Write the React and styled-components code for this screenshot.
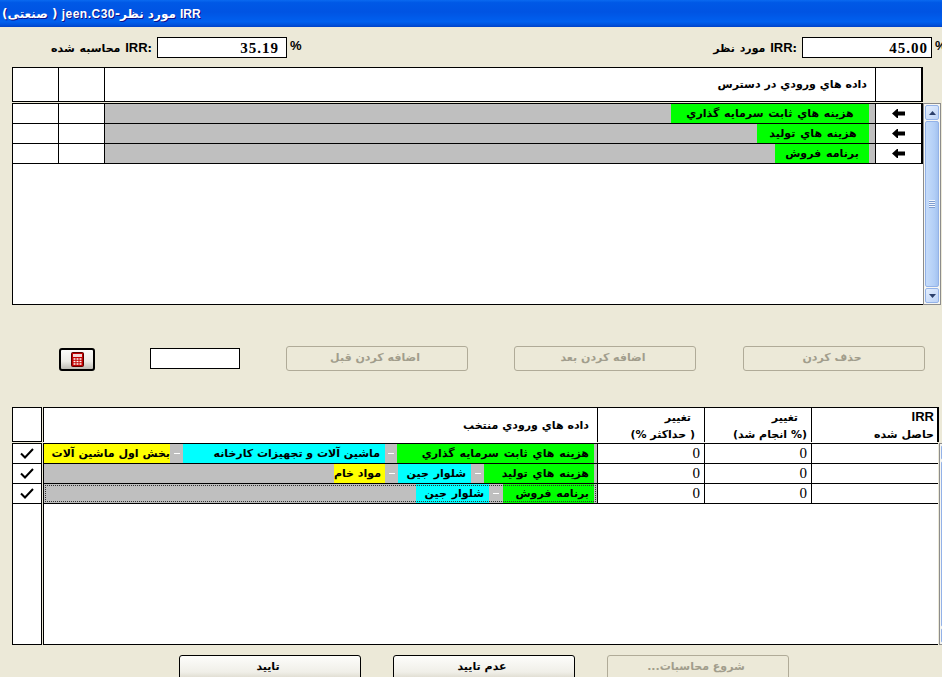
import React from 'react';
import styled, { createGlobalStyle } from 'styled-components';

const Global = createGlobalStyle`
  html, body { margin: 0; padding: 0; background: #ece9d8; }
  * { box-sizing: border-box; }
`;

const arabic = `"DejaVu Sans", "Noto Sans", sans-serif`;

const Page = styled.div`
  width: 942px;
  height: 677px;
  overflow: hidden;
  background: #ece9d8;
  font-family: ${arabic};
  font-weight: 700;
  font-size: 11px;
  color: #000;
`;

const TitleBar = styled.div`
  height: 27px;
  padding: 0 2px;
  direction: rtl;
  text-align: left;
  white-space: nowrap;
  line-height: 29px;
  color: #fff;
  font-size: 12px;
  background: linear-gradient(#0a6af0, #0058e6 10%, #0054e3 45%, #0060ef 80%, #0055e0 90%, #0042c8);
  text-shadow: 1px 1px 0 #0f1089;
`;

const Latin = styled.span`
  font-family: "Liberation Sans", sans-serif;
  font-size: ${p => p.$size || 12}px;
  letter-spacing: ${p => p.$spacing || 0}px;
`;

const TopRow = styled.div`
  margin-top: 10px;
  padding-left: 7px;
  height: 21px;
  display: grid;
  grid-template-columns: 645px 1fr;
`;

const Field = styled.div`
  display: flex;
  align-items: center;
`;

const FieldLabel = styled.div`
  width: 145px;
  flex: none;
  direction: rtl;
  text-align: right;
  white-space: nowrap;
  word-spacing: 1px;
`;

const Amount = styled.div`
  width: 130px;
  flex: none;
  height: 21px;
  margin-left: 5px;
  padding-right: ${p => p.$pad}px;
  border: 1px solid #000;
  background: #fff;
  text-align: right;
  font: 700 15px/20px "Liberation Serif", serif;
  letter-spacing: 1px;
`;

const Percent = styled.div`
  flex: none;
  margin: -5px 0 0 3px;
  font: 700 13px "Liberation Sans", sans-serif;
`;

const Header = styled.div`
  margin: 9px 0 1px 12px;
  width: 911px;
  height: 35px;
  display: grid;
  grid-template-columns: 45px 45px 770px 45px;
  gap: 1px;
  padding: 1px 2px 1px 1px;
  background: #000;
`;

const Cell = styled.div`
  background: #fff;
  direction: rtl;
  padding-right: ${p => p.$pad || 0}px;
  display: flex;
  align-items: center;
  white-space: nowrap;
`;

const ListWrap = styled.div`
  margin-left: 12px;
  height: 202px;
  display: flex;
`;

const List = styled.div`
  width: 911px;
  flex: none;
  background: #fff;
  border: 1px solid #000;
  border-right: 0;
`;

const AvailRow = styled.div`
  display: grid;
  grid-template-columns: 45px 45px 770px 45px;
  gap: 1px;
  height: 20px;
  padding: 0 2px 1px 0;
  background: #000;
`;

const Track = styled.div`
  position: relative;
  display: flex;
  direction: rtl;
  overflow: hidden;
  height: 100%;
  padding-right: ${p => p.$inset}px;
  background: #bfbfbf;
  ${p => p.$focused && `
    &::after {
      content: '';
      position: absolute;
      inset: 1px;
      border: 1px dotted #333;
    }
  `}
`;

const Segment = styled.div`
  flex: none;
  width: ${p => p.$w}px;
  padding: 0 ${p => p.$center ? 0 : p.$pad ?? 5}px;
  background: ${p => p.$color};
  text-align: ${p => p.$center ? 'center' : 'right'};
  line-height: 19px;
  white-space: nowrap;
  word-spacing: ${p => p.$tight ? 0 : 1}px;
`;

const Dash = styled.div`
  flex: none;
  width: ${p => p.$w || 13}px;
  display: flex;
  align-items: center;
  justify-content: center;
  &::after {
    content: '';
    width: 6px;
    height: 1px;
    background: #fff;
  }
`;

const ArrowCell = styled(Cell)`
  justify-content: center;
`;

const Scrollbar = styled.div`
  width: 18px;
  flex: none;
  padding: 1px;
  display: flex;
  flex-direction: column;
  gap: 1px;
  background: #f6f6f2;
  border: 1px solid #8c8c8c;
`;

const ScrollButton = styled.div`
  height: 15px;
  flex: none;
  border: 1px solid #93b2e8;
  border-radius: 2px;
  background: linear-gradient(135deg, #e4eefd, #bcd3f7);
  display: flex;
  align-items: center;
  justify-content: center;
`;

const Thumb = styled.div`
  flex: 1;
  border: 1px solid #93b2e8;
  border-radius: 2px;
  background: linear-gradient(90deg, #c6dcfa, #b2cef6 70%, #a4c2ef);
  display: flex;
  align-items: center;
  justify-content: center;
`;

const Grip = styled.div`
  width: 6px;
  height: 8px;
  background: repeating-linear-gradient(#f2f6fd 0 1px, #7e9ccf 1px 2px);
`;

const Actions = styled.div`
  margin-top: 41px;
  padding-left: 59px;
  height: 25px;
  display: flex;
  align-items: center;
  gap: 46px;
`;

const CalcButton = styled.div`
  width: 36px;
  height: 23px;
  margin: 2px 9px 0 0;
  border: 2px solid #000;
  border-radius: 3px;
  background: linear-gradient(#fbfbfa, #ecebe6 60%, #bdbbb4);
  display: flex;
  align-items: center;
  justify-content: center;
`;

const SmallInput = styled.div`
  width: 90px;
  height: 21px;
  border: 1px solid #000;
  background: #fff;
`;

const WinButton = styled.div`
  width: 182px;
  height: 25px;
  flex: none;
  direction: rtl;
  margin-left: ${p => p.$nudge || 0}px;
  padding: 0 4px 2px 0;
  display: flex;
  align-items: center;
  justify-content: center;
  border: 1px solid ${p => p.$disabled ? '#b0ab98' : '#000'};
  border-radius: 3px;
  color: ${p => p.$disabled ? '#a19d8c' : '#000'};
  background: ${p => p.$disabled ? 'transparent' : 'linear-gradient(#fdfdfb, #f0efe8 70%, #dcd9cc)'};
`;

const SelectedHead = styled.div`
  margin: 36px 0 1px 12px;
  height: 35px;
  display: flex;
  gap: 1px;
`;

const CheckHead = styled.div`
  width: 30px;
  flex: none;
  background: #fff;
  border: 1px solid #000;
`;

const HeadGrid = styled.div`
  width: 896px;
  flex: none;
  display: grid;
  grid-template-columns: 553px 106px 106px 125px;
  gap: 1px;
  padding: 1px 2px 1px 1px;
  background: #000;
`;

const TwoLine = styled.div`
  background: #fff;
  direction: rtl;
  display: flex;
  flex-direction: column;
  justify-content: ${p => p.$middle ? 'center' : 'flex-end'};
  padding: 0 ${p => p.$pad}px 1px 0;
  line-height: 17px;
  white-space: nowrap;
`;

const FirstLine = styled.div`
  padding-right: ${p => p.$pad || 0}px;
`;

const SelectedBody = styled.div`
  margin-left: 12px;
  height: 202px;
  display: flex;
  gap: 1px;
`;

const CheckColumn = styled.div`
  width: 30px;
  flex: none;
  background: #fff;
  border: 1px solid #000;
`;

const CheckCell = styled.div`
  height: 20px;
  border-bottom: 1px solid #000;
  display: flex;
  align-items: center;
  justify-content: center;
`;

const SelectedList = styled.div`
  width: 895px;
  flex: none;
  background: #fff;
  border: 1px solid #000;
  border-right: 0;
`;

const SelectedRow = styled.div`
  display: grid;
  grid-template-columns: 553px 106px 106px 126px;
  gap: 1px;
  height: 20px;
  padding-bottom: 1px;
  background: #000;
`;

const Amount0 = styled.div`
  background: #fff;
  text-align: right;
  padding-right: 4px;
  font: 400 15px/19px "Liberation Serif", serif;
`;

const Footer = styled.div`
  margin-top: 10px;
  padding-left: 179px;
  display: flex;
  gap: 32px;
`;

const LeftArrow = () => (
  <svg width="13" height="9" viewBox="0 0 13 9">
    <path d="M0 4.5 5 0h1v2.5h7v4H6V9H5z" fill="#000" />
  </svg>
);

const Check = () => (
  <svg width="14" height="11" viewBox="0 0 14 11">
    <path d="M1 5.5 5 9.5 13 1" fill="none" stroke="#000" strokeWidth="2" />
  </svg>
);

const Triangle = ({ down }) => (
  <svg width="7" height="4" viewBox="0 0 7 4">
    <path d={down ? 'M0 0h7L3.5 4z' : 'M3.5 0 7 4H0z'} fill="#2b3f6b" />
  </svg>
);

const Calculator = () => (
  <svg width="13" height="15" viewBox="0 0 13 15">
    <rect x="0.5" y="0.5" width="12" height="14" rx="1" fill="#c30000" stroke="#5a0000" />
    <rect x="2" y="2" width="9" height="3" fill="#f3d6d6" />
    <path d="M2.5 7h2M5.5 7h2M8.5 7h2M2.5 9.5h2M5.5 9.5h2M8.5 9.5h2M2.5 12h2M5.5 12h2M8.5 12h2" stroke="#fff" strokeWidth="1.4" />
  </svg>
);

const VScroll = () => (
  <Scrollbar>
    <ScrollButton><Triangle /></ScrollButton>
    <Thumb><Grip /></Thumb>
    <ScrollButton><Triangle down /></ScrollButton>
  </Scrollbar>
);

const available = [
  { label: 'هزينه هاي ثابت سرمايه گذاري', w: 198 },
  { label: 'هزينه هاي توليد', w: 112 },
  { label: 'برنامه فروش', w: 94 },
];

const selected = [
  {
    parts: [
      { label: 'هزينه هاي ثابت سرمايه گذاري', w: 197, color: '#00ff00', dash: 12 },
      { label: 'ماشين آلات و تجهيزات كارخانه', w: 202, color: '#00ffff', tight: true, dash: 13 },
      { label: 'بخش اول ماشين آلات', w: 127, color: '#ffff00', tight: true, pad: 0 },
    ],
  },
  {
    parts: [
      { label: 'هزينه هاي توليد', w: 110, color: '#00ff00', dash: 13 },
      { label: 'شلوار جين', w: 73, color: '#00ffff', dash: 13 },
      { label: 'مواد خام', w: 51, color: '#ffff00', tight: true, pad: 4 },
    ],
  },
  {
    focused: true,
    parts: [
      { label: 'برنامه فروش', w: 91, color: '#00ff00', dash: 14 },
      { label: 'شلوار جين', w: 73, color: '#00ffff' },
    ],
  },
];

export default function App() {
  return (
    <Page>
      <Global />
      <TitleBar>
        <Latin>IRR</Latin> مورد نظر-<Latin $spacing={0.5}>jeen.C30</Latin> ( صنعتی)
      </TitleBar>

      <TopRow>
        <Field>
          <FieldLabel>:<Latin $size={13}>IRR</Latin> محاسبه شده</FieldLabel>
          <Amount $pad={7}>35.19</Amount>
          <Percent>%</Percent>
        </Field>
        <Field>
          <FieldLabel>:<Latin $size={13}>IRR</Latin> مورد نظر</FieldLabel>
          <Amount $pad={3}>45.00</Amount>
          <Percent>%</Percent>
        </Field>
      </TopRow>

      <Header>
        <Cell />
        <Cell />
        <Cell $pad={8}>داده هاي ورودي در دسترس</Cell>
        <Cell />
      </Header>

      <ListWrap>
        <List>
          {available.map(row => (
            <AvailRow key={row.label}>
              <Cell />
              <Cell />
              <Track $inset={6}>
                <Segment $w={row.w} $color="#00ff00" $center>{row.label}</Segment>
              </Track>
              <ArrowCell><LeftArrow /></ArrowCell>
            </AvailRow>
          ))}
        </List>
        <VScroll />
      </ListWrap>

      <Actions>
        <CalcButton><Calculator /></CalcButton>
        <SmallInput />
        <WinButton $disabled>اضافه كردن قبل</WinButton>
        <WinButton $disabled>اضافه كردن بعد</WinButton>
        <WinButton $disabled $nudge={1}>حذف كردن</WinButton>
      </Actions>

      <SelectedHead>
        <CheckHead />
        <HeadGrid>
          <TwoLine $pad={8} $middle>داده هاي ورودي منتخب</TwoLine>
          <TwoLine $pad={9}>
            <FirstLine $pad={4}>تغيير</FirstLine>
            <div>( حداكثر %)</div>
          </TwoLine>
          <TwoLine $pad={4}>
            <FirstLine $pad={9}>تغيير</FirstLine>
            <div>(% انجام شد)</div>
          </TwoLine>
          <TwoLine $pad={3}>
            <FirstLine><Latin $size={13}>IRR</Latin></FirstLine>
            <div>حاصل شده</div>
          </TwoLine>
        </HeadGrid>
      </SelectedHead>

      <SelectedBody>
        <CheckColumn>
          {selected.map((row, i) => (
            <CheckCell key={i}><Check /></CheckCell>
          ))}
        </CheckColumn>
        <SelectedList>
          {selected.map((row, i) => (
            <SelectedRow key={i}>
              <Track $inset={3} $focused={row.focused}>
                {row.parts.map(part => (
                  <React.Fragment key={part.label}>
                    <Segment $w={part.w} $color={part.color} $tight={part.tight} $pad={part.pad}>{part.label}</Segment>
                    {part.dash && <Dash $w={part.dash} />}
                  </React.Fragment>
                ))}
              </Track>
              <Amount0>0</Amount0>
              <Amount0>0</Amount0>
              <Amount0 />
            </SelectedRow>
          ))}
        </SelectedList>
        <VScroll />
      </SelectedBody>

      <Footer>
        <WinButton>تاييد</WinButton>
        <WinButton>عدم تاييد</WinButton>
        <WinButton $disabled>شروع محاسبات...</WinButton>
      </Footer>
    </Page>
  );
}
